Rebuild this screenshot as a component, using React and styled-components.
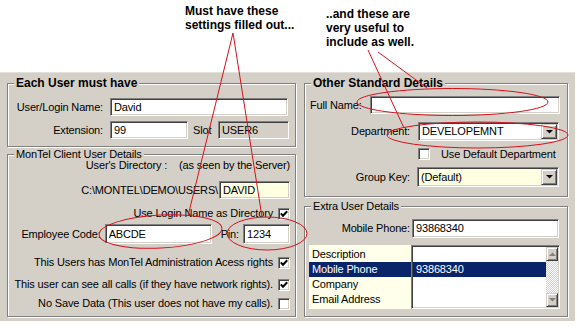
import React from "react";
import styled, { createGlobalStyle } from "styled-components";

const GlobalStyle = createGlobalStyle`
  body {
    margin: 0;
    background: #fff;
    font-family: "Liberation Sans", Arial, sans-serif;
  }
`;

const Page = styled.div`
  position: relative;
  width: 577px;
  height: 331px;
  overflow: hidden;
  background: #fff;
  color: #000;
  font-size: 11px;
  letter-spacing: -0.15px;
`;

const Header = styled.header`
  display: flex;
  box-sizing: border-box;
  height: 72px;
  padding-left: 185px;
`;

const Note = styled.p`
  width: ${(p) => p.$w}px;
  margin: ${(p) => p.$top}px 0 0;
  font: bold 12px/14px "Liberation Sans", Arial, sans-serif;
  letter-spacing: 0;
`;

const Panel = styled.main`
  display: flex;
  gap: 8px;
  box-sizing: border-box;
  width: 575px;
  height: 249px;
  padding: 10px 0 0 7px;
  background: #d4d0c8;
  border-top: 1px solid #e2e0da;
`;

const Column = styled.div`
  display: flex;
  flex-direction: column;
  gap: ${(p) => p.$gap}px;
  width: ${(p) => p.$w}px;
`;

const Group = styled.section`
  display: flex;
  flex-direction: column;
  box-sizing: border-box;
  height: ${(p) => p.$h}px;
  padding-right: ${(p) => p.$pr}px;
  border: 1px solid #808080;
  box-shadow: inset 1px 1px #fff, 1px 1px #fff;
`;

const Legend = styled.h3`
  align-self: flex-start;
  margin: ${(p) => (p.$bold ? -8 : -6)}px 0 0 6px;
  padding: 0 2px;
  background: #d4d0c8;
  font: ${(p) => (p.$bold ? "bold 12px/14px" : "11px/11px")} "Liberation Sans", Arial, sans-serif;
  letter-spacing: ${(p) => (p.$bold ? 0 : -0.15)}px;
  white-space: nowrap;
`;

const Row = styled.div`
  display: flex;
  align-items: center;
  justify-content: ${(p) => (p.$end ? "flex-end" : "flex-start")};
  height: ${(p) => p.$h}px;
  margin-top: ${(p) => p.$mt}px;
  padding-left: ${(p) => p.$pl || 0}px;
  line-height: ${(p) => Math.min(p.$h, 13)}px;
  white-space: nowrap;
`;

const Label = styled.label`
  flex-shrink: 0;
  width: ${(p) => (p.$w ? `${p.$w}px` : "auto")};
  margin: 0 ${(p) => p.$gap || 0}px 0 ${(p) => p.$ml || 0}px;
  text-align: right;
`;

const Field = styled.div`
  display: flex;
  align-items: center;
  flex-shrink: 0;
  box-sizing: border-box;
  width: ${(p) => p.$w}px;
  height: ${(p) => p.$h || 18}px;
  margin-left: ${(p) => (p.$auto ? "auto" : "0")};
  padding: 1px 1px 1px 3px;
  background: ${(p) => p.$bg || "#fff"};
  border: 1px solid;
  border-color: #808080 #fff #fff #808080;
  box-shadow: inset 1px 1px #404040, inset -1px -1px #d4d0c8;
`;

const FieldText = styled.span`
  flex: 1;
  overflow: hidden;
`;

const Raised = styled.span`
  display: flex;
  align-items: center;
  justify-content: center;
  box-sizing: border-box;
  background: #d4d0c8;
  border: 1px solid;
  border-color: #d4d0c8 #404040 #404040 #d4d0c8;
  box-shadow: inset 1px 1px #fff, inset -1px -1px #808080;
`;

const DropButton = styled(Raised)`
  width: 16px;
  height: 100%;
`;

const Box = styled.span`
  display: flex;
  align-items: center;
  justify-content: center;
  flex-shrink: 0;
  box-sizing: border-box;
  width: 12px;
  height: 12px;
  margin: 0 ${(p) => p.$mr || 0}px 0 ${(p) => p.$ml || 0}px;
  background: #fff;
  border: 1px solid;
  border-color: #808080 #fff #fff #808080;
  box-shadow: inset 1px 1px #404040, inset -1px -1px #d4d0c8;
`;

const Gap = styled.span`
  display: inline-block;
  width: ${(p) => p.$w}px;
`;

const ListRow = styled.div`
  display: flex;
  height: 64px;
  margin-top: 7px;
  padding-left: 4px;
`;

const Keys = styled.ul`
  width: 102px;
  margin: 0;
  padding: 2px 0 0;
  list-style: none;
  background: #ffffea;
`;

const Item = styled.li`
  height: 15px;
  padding-left: 3px;
  line-height: 15px;
  background: ${(p) => (p.$sel ? "#0a246a" : "transparent")};
  color: ${(p) => (p.$sel ? "#fff" : "#000")};
`;

const ListBox = styled.div`
  display: flex;
  box-sizing: border-box;
  width: 149px;
  padding: 1px;
  background: #fff;
  border: 1px solid;
  border-color: #808080 #fff #fff #808080;
  box-shadow: inset 1px 1px #404040, inset -1px -1px #d4d0c8;
`;

const Values = styled.ul`
  flex: 1;
  margin: 0;
  padding: 0;
  list-style: none;
`;

const ScrollBar = styled.div`
  display: flex;
  flex-direction: column;
  width: 12px;
`;

const ScrollButton = styled(Raised)`
  height: 14px;
`;

const Track = styled.div`
  flex: 1;
  background: repeating-conic-gradient(#fff 0 25%, #d4d0c8 0 50%) 0 0 / 2px 2px;
`;

const Overlay = styled.svg`
  position: absolute;
  top: 0;
  left: 0;
  pointer-events: none;
`;

const Arrow = ({ up, color = "#000" }) => (
  <svg width="7" height="4" viewBox="0 0 7 4">
    <path d={up ? "M0 4h7L3.5 0.5z" : "M0 0h7L3.5 3.5z"} fill={color} />
  </svg>
);

const Tick = () => (
  <svg width="8" height="8" viewBox="0 0 8 8">
    <path d="M0.8 3.4l2.2 2.3L7.2 1.2" fill="none" stroke="#000" strokeWidth="2" />
  </svg>
);

const Check = ({ on, ml, mr }) => (
  <Box $ml={ml} $mr={mr}>
    {on && <Tick />}
  </Box>
);

const Select = ({ w, h, bg, children }) => (
  <Field $w={w} $h={h} $bg={bg}>
    <FieldText>{children}</FieldText>
    <DropButton>
      <Arrow />
    </DropButton>
  </Field>
);

const keys = ["Description", "Mobile Phone", "Company", "Email Address"];
const values = ["", "93868340", "", ""];

const Callouts = () => (
  <Overlay width="577" height="331" viewBox="0 0 577 331">
    <g fill="none" stroke="#d8101c" strokeWidth="1">
      <line x1="233" y1="33" x2="188" y2="216" />
      <line x1="233" y1="33" x2="262" y2="217" />
      <line x1="368" y1="50" x2="404" y2="128" />
      <line x1="378" y1="52" x2="427" y2="88" />
      <ellipse cx="160.5" cy="231.5" rx="61.5" ry="16.5" transform="rotate(-3 160.5 231.5)" />
      <ellipse cx="267" cy="233.5" rx="40" ry="16.5" />
      <ellipse cx="452.5" cy="102" rx="95.5" ry="13.5" />
      <ellipse cx="477.5" cy="135" rx="90.5" ry="13" />
    </g>
  </Overlay>
);

const App = () => {
  return (
    <Page>
      <GlobalStyle />
      <Header>
        <Note $w={141} $top={4}>
          Must have these settings filled out...
        </Note>
        <Note $w={110} $top={7}>
          ..and these are very useful to include as well.
        </Note>
      </Header>
      <Panel>
        <Column $w={289} $gap={7}>
          <Group $h={64} $pr={6}>
            <Legend $bold>Each User must have</Legend>
            <Row $mt={8} $h={18}>
              <Label $w={95} $gap={7}>User/Login Name:</Label>
              <Field $w={178}>
                <FieldText>David</FieldText>
              </Field>
            </Row>
            <Row $mt={5} $h={18}>
              <Label $w={95} $gap={7}>Extension:</Label>
              <Field $w={78}>
                <FieldText>99</FieldText>
              </Field>
              <Label $ml={5}>Slot</Label>
              <Field $w={71} $auto $bg="#d4d0c8">
                <FieldText>USER6</FieldText>
              </Field>
            </Row>
          </Group>
          <Group $h={163} $pr={5}>
            <Legend>MonTel Client User Details</Legend>
            <Row $mt={0} $h={11} $end>
              User's Directory :<Gap $w={12} />(as seen by the Server)
            </Row>
            <Row $mt={10} $h={18} $end>
              <Label $gap={1}>C:\MONTEL\DEMO\USERS\</Label>
              <Field $w={71} $bg="#ffffe1">
                <FieldText>DAVID</FieldText>
              </Field>
            </Row>
            <Row $mt={8} $h={13} $end>
              Use Login Name as Directory
              <Check on ml={5} />
            </Row>
            <Row $mt={4} $h={20} $end>
              <Label $gap={4}>Employee Code:</Label>
              <Field $w={107} $h={20}>
                <FieldText>ABCDE</FieldText>
              </Field>
              <Label $ml={9} $gap={4}>
                Pin:
              </Label>
              <Field $w={47} $h={20}>
                <FieldText>1234</FieldText>
              </Field>
            </Row>
            <Row $mt={12} $h={13} $end>
              This Users has MonTel Administration Acess rights
              <Check on ml={5} />
            </Row>
            <Row $mt={9} $h={13} $end>
              This user can see all calls (if they have network rights).
              <Check on ml={5} />
            </Row>
            <Row $mt={6} $h={13} $end>
              No Save Data (This user does not have my calls).
              <Check ml={5} />
            </Row>
          </Group>
        </Column>
        <Column $w={264} $gap={9}>
          <Group $h={114} $pr={7}>
            <Legend $bold>Other Standard Details</Legend>
            <Row $mt={6} $h={18} $pl={5}>
              <Label>Full Name:</Label>
              <Field $w={190} $auto />
            </Row>
            <Row $mt={8} $h={19}>
              <Label $w={105} $gap={8}>Department:</Label>
              <Select w={141} h={19}>
                DEVELOPEMNT
              </Select>
            </Row>
            <Row $mt={7} $h={12} $pl={113}>
              <Check mr={11} />
              Use Default Department
            </Row>
            <Row $mt={7} $h={20}>
              <Label $w={105} $gap={7}>Group Key:</Label>
              <Select w={142} h={20} bg="#ffffe1">
                (Default)
              </Select>
            </Row>
          </Group>
          <Group $h={111} $pr={7}>
            <Legend>Extra User Details</Legend>
            <Row $mt={7} $h={19}>
              <Label $w={105} $gap={2}>Mobile Phone:</Label>
              <Field $w={147} $h={19}>
                <FieldText>93868340</FieldText>
              </Field>
            </Row>
            <ListRow>
              <Keys>
                {keys.map((k) => (
                  <Item key={k} $sel={k === "Mobile Phone"}>
                    {k}
                  </Item>
                ))}
              </Keys>
              <ListBox>
                <Values>
                  {values.map((v, i) => (
                    <Item key={i} $sel={i === 1}>
                      {v}
                    </Item>
                  ))}
                </Values>
                <ScrollBar>
                  <ScrollButton>
                    <Arrow up color="#808080" />
                  </ScrollButton>
                  <Track />
                  <ScrollButton>
                    <Arrow color="#808080" />
                  </ScrollButton>
                </ScrollBar>
              </ListBox>
            </ListRow>
          </Group>
        </Column>
      </Panel>
      <Callouts />
    </Page>
  );
};

export default App;
